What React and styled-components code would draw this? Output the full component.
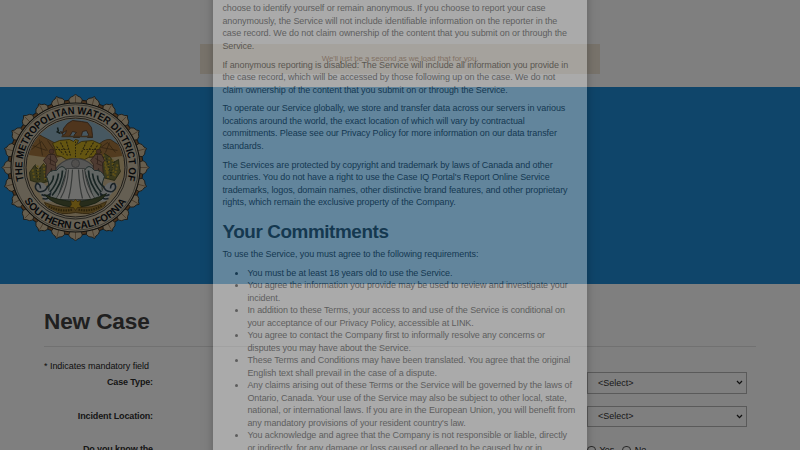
import React from "react";
import styled, { createGlobalStyle } from "styled-components";

const GlobalStyle = createGlobalStyle`
  * { box-sizing: border-box; }
  html, body { margin: 0; height: 100%; overflow: hidden; }
  body { font-family: "Liberation Sans", Arial, sans-serif; font-size: 9px; line-height: 12.5px; color: #333; background: #fff; }
`;

const Page = styled.div`
  position: relative;
  width: 800px;
  height: 450px;
  overflow: hidden;
  background: #fff;
`;
const TopBar = styled.div`
  height: 87px;
  padding-top: 44px;
  display: flex;
  justify-content: center;
  align-items: flex-start;
`;
const Notice = styled.div`
  width: 400px;
  height: 30px;
  padding-top: 9px;
  text-align: center;
  font-size: 8px;
  letter-spacing: -0.12px;
  background: #f1e6d6;
  color: #7d4a1a;
`;
const Banner = styled.header`
  height: 197px;
  padding: 5px 0 0;
  background: #1e8ad4;
  svg { display: block; }
`;
const Content = styled.main`
  padding: 25px 44px 0;
`;
const Title = styled.h1`
  margin: 0;
  height: 38px;
  font-size: 22.6px;
  line-height: 26px;
  font-weight: 700;
  letter-spacing: -0.15px;
  color: #404040;
  border-bottom: 1px solid #e2e2e2;
`;
const Mandatory = styled.p`
  margin: 12.5px 0 0;
  color: #222;
  letter-spacing: -0.04px;
`;
const FormRow = styled.div`
  display: grid;
  grid-template-columns: 109px 160px;
  column-gap: 434px;
  height: 33.5px;
`;
const Label = styled.label`
  padding-top: 4px;
  text-align: right;
  font-weight: 700;
  letter-spacing: -0.13px;
  color: #2e2e2e;
`;
const SelectBox = styled.div`
  height: 21.5px;
  padding: 0 3px 0 10px;
  display: flex;
  align-items: center;
  justify-content: space-between;
  border: 1px solid #b4b4b4;
  color: #333;
`;
const Choices = styled.div`
  display: flex;
  align-items: flex-start;
  padding-top: 4.5px;
  gap: 8px;
  color: #222;
`;
const Choice = styled.span`
  display: flex;
  align-items: center;
  gap: 4px;
`;
const Radio = styled.span`
  width: 8.5px;
  height: 8.5px;
  border: 1px solid #555;
  border-radius: 50%;
`;
const Backdrop = styled.div`
  position: absolute;
  inset: 0;
  background: rgba(0, 0, 0, 0.5);
`;
const Dialog = styled.section`
  position: absolute;
  top: -30px;
  left: 213px;
  width: 374px;
  height: 520px;
  padding: 32.3px 0 0 9.4px;
  opacity: 0.36;
  background: #f6f6f6;
  box-shadow: 0 3px 9px rgba(0, 0, 0, 0.7);
  color: #222;
`;
const Paragraph = styled.p`
  margin: 0 0 6.25px;
`;
const Heading = styled.h2`
  margin: 13.3px 0 5.7px;
  font-size: 18.9px;
  line-height: 20.6px;
  font-weight: 700;
  letter-spacing: -0.42px;
  color: #222;
`;
const Commitments = styled.ul`
  margin: 0;
  padding-left: 25px;
`;
const Line = styled.span`
  display: block;
  white-space: nowrap;
  letter-spacing: -0.08px;

  ${Commitments} & {
    letter-spacing: -0.09px;
  }
`;

const paragraphs = [
  ["choose to identify yourself or remain anonymous. If you choose to report your case", "anonymously, the Service will not include identifiable information on the reporter in the", "case record. We do not claim ownership of the content that you submit on or through the", "Service."],
  ["If anonymous reporting is disabled: The Service will include all information you provide in", "the case record, which will be accessed by those following up on the case. We do not", "claim ownership of the content that you submit on or through the Service."],
  ["To operate our Service globally, we store and transfer data across our servers in various", "locations around the world, the exact location of which will vary by contractual", "commitments. Please see our Privacy Policy for more information on our data transfer", "standards."],
  ["The Services are protected by copyright and trademark by laws of Canada and other", "countries. You do not have a right to use the Case IQ Portal's Report Online Service", "trademarks, logos, domain names, other distinctive brand features, and other proprietary", "rights, which remain the exclusive property of the Company."],
];
const commitments = [
  ["You must be at least 18 years old to use the Service."],
  ["You agree the information you provide may be used to review and investigate your", "incident."],
  ["In addition to these Terms, your access to and use of the Service is conditional on", "your acceptance of our Privacy Policy, accessible at LINK."],
  ["You agree to contact the Company first to informally resolve any concerns or", "disputes you may have about the Service."],
  ["These Terms and Conditions may have been translated. You agree that the original", "English text shall prevail in the case of a dispute."],
  ["Any claims arising out of these Terms or the Service will be governed by the laws of", "Ontario, Canada. Your use of the Service may also be subject to other local, state,", "national, or international laws. If you are in the European Union, you will benefit from", "any mandatory provisions of your resident country's law."],
  ["You acknowledge and agree that the Company is not responsible or liable, directly", "or indirectly, for any damage or loss caused or alleged to be caused by or in"],
];

const Lines = ({ items }) => items.map((t) => <Line key={t}>{t}</Line>);

const Chevron = () => (
  <svg width="7" height="5" viewBox="0 0 7 5" fill="none" stroke="#222" strokeWidth="1.3">
    <path d="M1 1l2.5 2.6L6 1" />
  </svg>
);

const scallops = Array.from({ length: 24 }, (_, i) => i * 15);

function Seal() {
  return (
    <svg width="152" height="158" viewBox="-75.5 -75.5 152 158">
      <defs>
        <path id="arcTop" d="M-51.7 12.9A53.3 53.3 0 1 1 51.7 12.9" />
        <path id="arcBottom" d="M-51.4 33.4A61.3 61.3 0 0 0 51.4 33.4" />
        <clipPath id="disc"><circle r="48.5" /></clipPath>
      </defs>
      <circle r="67.5" fill="#94673a" stroke="#302b25" />
      {scallops.map((a) => (
        <g key={a} transform={`rotate(${a})`}>
          <path d="M-5.5-64L-6.8-67.5Q-5.5-71-2-71.5L0-73.5L2-71.5Q5.5-71 6.8-67.5L5.5-64Z" fill="#cfbd9c" stroke="#30302b" strokeWidth=".8" />
          <path d="M0-72V-64" stroke="#75573a" strokeWidth=".6" />
        </g>
      ))}
      <circle r="64.5" fill="#cbbfa6" stroke="#22231f" strokeWidth="1.1" />
      <circle r="62.8" fill="none" stroke="#57544b" strokeWidth=".7" />
      <circle r="51.5" fill="none" stroke="#302e2a" strokeWidth=".8" />
      <circle r="49.5" fill="#cdb993" stroke="#302e2a" strokeWidth=".9" />
      <g clipPath="url(#disc)">
        <path d="M-50-50H50V-10H-50Z" fill="#8fb0c2" />
        <path d="M-50-22Q-41-38-33-31L-8-18V-8H-50ZM50-18L35-28Q28-29 20-20L8-16V-7H50Z" fill="#a5773f" stroke="#59401f" strokeWidth=".7" />
        <path d="M-44-18l10-8 6 9M-36-28l3 16M-43-22l14 5M-28-27l7 10M20-16l12-9 8 10M26-20l16 3M34-25l-4 10" fill="none" stroke="#59401f" strokeWidth=".7" />
        <path d="M-50-13L-22-9L0-14L22-8L50-12V12H-50Z" fill="#cfb889" />
        <path d="M-46 5l5-7 4 4 5-6 6 7 5-4 1 13-15 4-10-3ZM26-2l3-12 6 4 3 5 5-3 1 9 1 3-6 9-12-3Z" fill="#77743a" stroke="#3d4520" strokeWidth=".8" />
        <path d="M-43 2l2 9M-38-2l1 12M-32-3l2 16M28-13l3 18M34-10l-2 16M30-5l3 17M37-8l1 17M42-3l-3 12" stroke="#bda12f" strokeWidth="2" strokeDasharray="2 1.4" />
        <path d="M-40-3l2 15M-35 0l-1 13M-28 1l-2 12M31-9l5 18M39-6l-4 14" stroke="#37431f" strokeWidth="1" strokeDasharray="1.2 1.6" />
        <path d="M-13-33l1-6 4-5 5-3 9 1 6 1 4 5 1 8v2h-5l1-3-2-4-4 1-1 4-2 2h-6l1-3 2-2-4-1-3 5h-6l-1-1 3-2 1-3-3 2-3-1z" fill="#9f6a3b" stroke="#51351f" strokeWidth=".8" />
        <path d="M-14-31H17" stroke="#795d38" strokeWidth="1.5" />
        <path d="M-18-40l1 4M-19-36l4 2" stroke="#243a37" strokeWidth="1.5" />
        <path d="M-21-20l-2-4 7-3 10-1 4 2 2-2 3 1-2 4 5-3 11-1 9 4-2 4 2 4-6 1-1 3-6 1-4 2-5-1-4 3-3-3-6 1-5-3-5-1-1-4z" fill="#c9aa23" stroke="#665716" strokeWidth=".9" />
        <path d="M-19-21l7 8M-15-25l7 13M-9-26l4 14M22-22l-8 11M18-25l-8 13M11-26l-6 13" stroke="#51471b" strokeWidth="1.1" strokeDasharray="2.2 1" />
        <path d="M-20-18h12M8-18h16M0-26v16" stroke="#51471b" strokeWidth="1" strokeDasharray="1.6 1.2" />
        <circle cx="0" cy="15" r="24" fill="#aeafad" stroke="#777" strokeWidth="1.2" />
        <circle cx="0" cy="-4" r="4" fill="#a29e9a" stroke="#777" />
        {[-24, 23].map((x) => (
          <g key={x} transform={`translate(${x} -9)`}>
            <circle cy="-7" r="2.3" fill="#8c5f49" stroke="#4a362e" strokeWidth=".5" />
            <path d="M-3-4h6l3 6-2 3 1 14h-4l-1-9-3 9h-3l1-13-3-4z" fill="#9c7763" stroke="#573e35" strokeWidth=".8" />
            <path d="M-3 0l7 4M-2 5l5 2M-1-3v8" stroke="#5d4034" strokeWidth=".8" />
          </g>
        ))}
        <path d="M-19 3Q-13-5-9 3L-18 31H-29Q-24 20-29 9Q-26 2-19 3ZM19 3Q13-5 9 3L18 31H29Q24 20 29 9Q26 2 19 3Z" fill="#c2cbc7" stroke="#445b58" />
        <path d="M-13 3Q-13 16-25 30M-17 6Q-18 16-26 25M-22 8Q-22 15-29 20M13 3Q13 16 25 30M17 6Q18 16 26 25M22 8Q22 15 29 20" fill="none" stroke="#314946" strokeWidth="1.7" />
        <path d="M-41 18Q-35 11-29 19Q-25 29-16 34H16Q25 29 29 19Q35 11 42 18L30 34H-30Z" fill="#c6cbca" />
        <path d="M-35 21q0-5-4-5-3 5 2 8 7 1 9-5M-34 27q5 3 9-1-1 7-8 5M35 21q0-5 4-5 3 5-2 8-7 1-9-5M34 27q-5 3-9-1 1 7 8 5" fill="none" stroke="#34454e" strokeWidth="1.5" />
        <path d="M-9 1Q-10 18-20 32H20Q10 18 9 1Z" fill="#dddcd8" stroke="#555957" strokeWidth=".7" />
        <path d="M-7 2Q-8 19-15 31M-3 2Q-4 20-7 31M3 2Q4 20 7 31M7 2Q8 19 15 31" fill="none" stroke="#6e7472" strokeWidth="1.2" />
        <path d="M-31 27Q-18 33 0 34Q18 33 31 26Q25 38 0 40Q-23 38-31 27Z" fill="#4e5936" stroke="#263822" strokeWidth=".8" />
        <path d="M-31 35Q-14 42 0 39Q16 42 31 34L27 43Q14 48 0 45Q-14 48-27 43Z" fill="#9c7b36" stroke="#5b4316" strokeWidth=".8" />
        <path d="M-27 39Q-13 45-3 42M3 42Q14 45 27 38" fill="none" stroke="#594516" strokeWidth="2.2" strokeDasharray="1.5 1" />
        <path d="M0 32l2 2 3-1-1 4 2 3-4 0-2 3-2-3-4 0 2-3-1-4 3 1z" fill="#c29b24" stroke="#5b4316" strokeWidth=".6" />
      </g>
      <g fill="#11151a" fontFamily='"Liberation Sans", Arial, sans-serif' fontWeight="700" fontSize="10.3">
        <text><textPath href="#arcTop" startOffset="0" textLength="193" lengthAdjust="spacingAndGlyphs">THE METROPOLITAN WATER DISTRICT OF</textPath></text>
        <text><textPath href="#arcBottom" startOffset="0" textLength="121" lengthAdjust="spacingAndGlyphs">SOUTHERN CALIFORNIA</textPath></text>
      </g>
    </svg>
  );
}

export default function App() {
  return (
    <>
      <GlobalStyle />
      <Page>
        <TopBar><Notice>We'll just be a second as we load that for you.</Notice></TopBar>
        <Banner><Seal /></Banner>
        <Content>
          <Title>New Case</Title>
          <Mandatory>* Indicates mandatory field</Mandatory>
          <FormRow>
            <Label>Case Type:</Label>
            <SelectBox>&lt;Select&gt;<Chevron /></SelectBox>
          </FormRow>
          <FormRow>
            <Label>Incident Location:</Label>
            <SelectBox>&lt;Select&gt;<Chevron /></SelectBox>
          </FormRow>
          <FormRow>
            <Label>Do you know the</Label>
            <Choices>
              <Choice><Radio />Yes</Choice>
              <Choice><Radio />No</Choice>
            </Choices>
          </FormRow>
        </Content>
        <Backdrop />
        <Dialog>
          {paragraphs.map((p) => <Paragraph key={p[0]}><Lines items={p} /></Paragraph>)}
          <Heading>Your Commitments</Heading>
          <Paragraph><Line>To use the Service, you must agree to the following requirements:</Line></Paragraph>
          <Commitments>
            {commitments.map((c) => <li key={c[0]}><Lines items={c} /></li>)}
          </Commitments>
        </Dialog>
      </Page>
    </>
  );
}
